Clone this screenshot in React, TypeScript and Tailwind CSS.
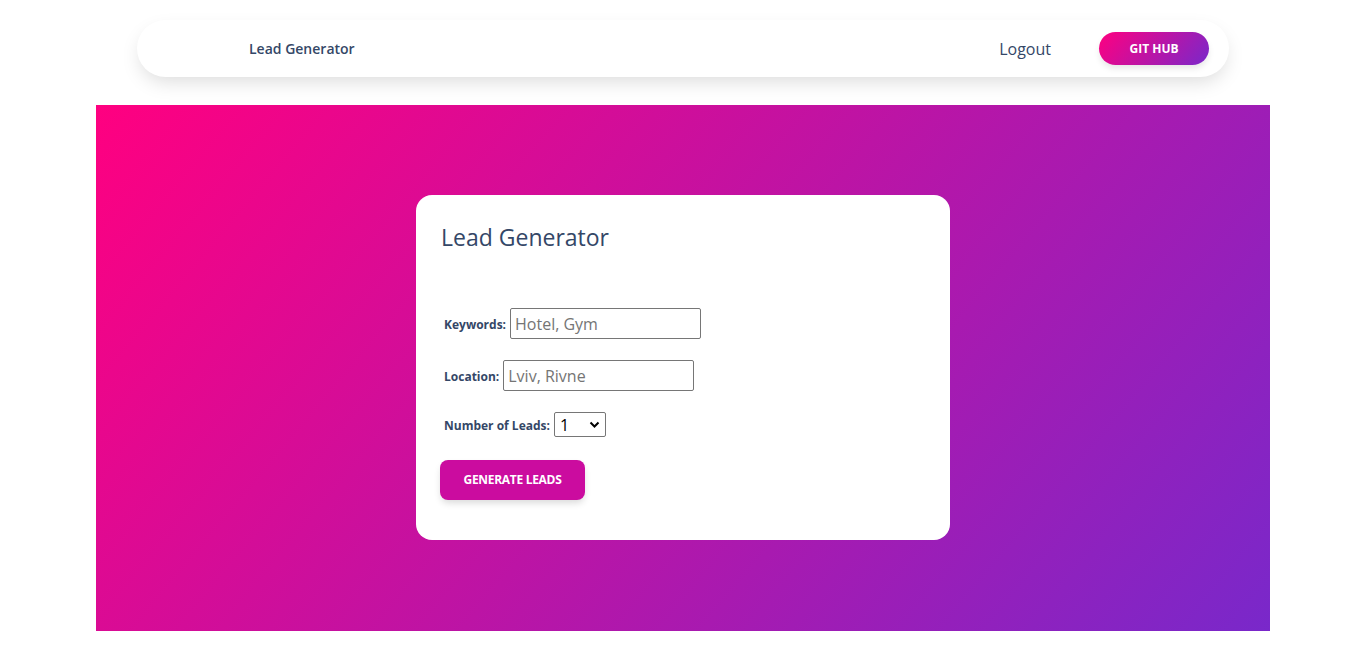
export default function App() {
  const font = { fontFamily: '"Open Sans", "Noto Sans", sans-serif' };
  return (
    <div className="min-h-[657px] w-full bg-white text-[#344767]" style={font}>
      <div className="flex justify-center pt-[20px]">
        <nav className="flex h-[57px] w-[1092px] items-center rounded-[30px] bg-white pl-[112px] pr-[20px] shadow-[0_8px_20px_-4px_rgba(0,0,0,0.15)]">
          <span className="text-[14px] font-semibold">Lead Generator</span>
          <div className="ml-auto flex items-center">
            <span className="mr-[48px] text-[16px]">Logout</span>
            <button className="flex h-[33px] w-[110px] items-center justify-center rounded-full bg-[linear-gradient(310deg,#7928ca,#ff0080)] text-[12px] font-bold text-white shadow-[0_4px_7px_-1px_rgba(0,0,0,0.11)]">
              GIT HUB
            </button>
          </div>
        </nav>
      </div>
      <div className="mt-[28px] flex justify-center">
        <section className="flex h-[526px] w-[1174px] items-start justify-center bg-[linear-gradient(310deg,#7928ca,#ff0080)] pt-[90px]">
          <div className="h-[345px] w-[534px] rounded-[16px] bg-white px-[24px] pt-[24px]">
            <h1 className="ml-[1px] text-[23px] font-medium leading-[36px]">Lead Generator</h1>
            <form className="mt-[53px] flex flex-col items-start">
              <div className="ml-[4px] flex items-center">
                <label className="mr-[4px] mt-[3px] text-[12px] font-bold">Keywords:</label>
                <input
                  placeholder="Hotel, Gym"
                  className="h-[31px] w-[191px] rounded-[2px] border border-[#767676] px-[4px] text-[16px] placeholder:text-[#757575]"
                />
              </div>
              <div className="ml-[4px] mt-[21px] flex items-center">
                <label className="mr-[4px] mt-[3px] text-[12px] font-bold">Location:</label>
                <input
                  placeholder="Lviv, Rivne"
                  className="h-[31px] w-[191px] rounded-[2px] border border-[#767676] px-[4px] text-[16px] placeholder:text-[#757575]"
                />
              </div>
              <div className="ml-[4px] mt-[21px] flex items-center">
                <label className="mr-[4px] mt-[2px] text-[12px] font-bold">Number of Leads:</label>
                <div className="relative flex h-[25px] w-[52px] items-center rounded-[2px] border border-[#767676] pl-[5px] text-[16px] text-black">
                  <span>1</span>
                  <svg className="absolute right-[5px] top-[8px]" width="11" height="8" viewBox="0 0 11 8">
                    <path d="M1.5 1.5 L5.5 5.5 L9.5 1.5" fill="none" stroke="#000" strokeWidth="2" />
                  </svg>
                </div>
              </div>
              <button
                type="button"
                className="mt-[23px] flex h-[40px] w-[145px] items-center justify-center rounded-[8px] bg-[#cb0c9f] text-[12px] font-bold tracking-[-0.3px] text-white shadow-[0_4px_7px_-1px_rgba(0,0,0,0.15)]"
              >
                GENERATE LEADS
              </button>
            </form>
          </div>
        </section>
      </div>
    </div>
  );
}
